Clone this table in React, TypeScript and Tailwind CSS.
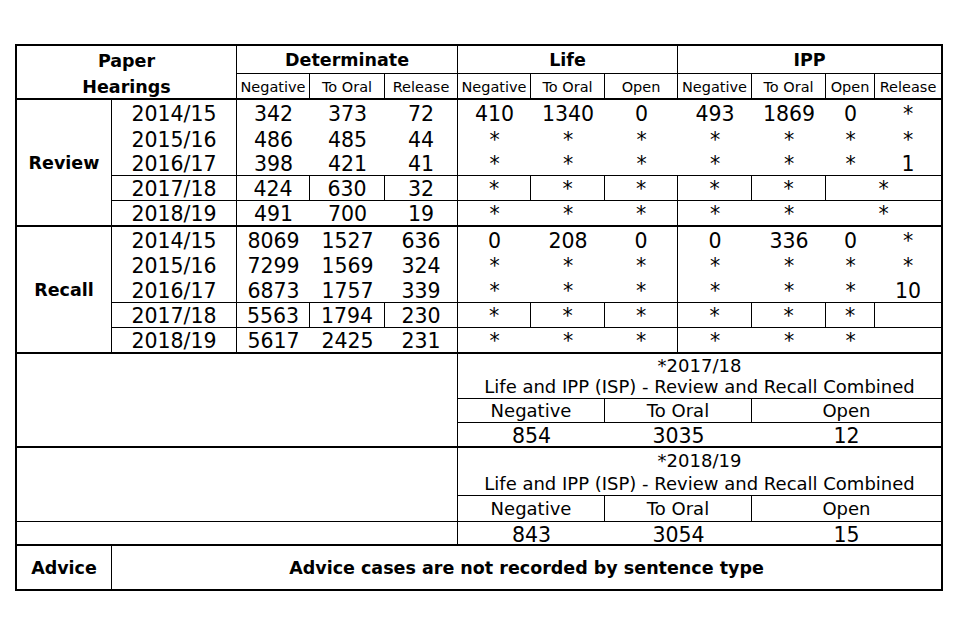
import React from "react";

type Row = {
  year: string;
  det: string[];
  life: string[];
  ipp: string[];
};

const S = "*";

const review: Row[] = [
  { year: "2014/15", det: ["342", "373", "72"], life: ["410", "1340", "0"], ipp: ["493", "1869", "0", S] },
  { year: "2015/16", det: ["486", "485", "44"], life: [S, S, S], ipp: [S, S, S, S] },
  { year: "2016/17", det: ["398", "421", "41"], life: [S, S, S], ipp: [S, S, S, "1"] },
  { year: "2017/18", det: ["424", "630", "32"], life: [S, S, S], ipp: [S, S, S] },
  { year: "2018/19", det: ["491", "700", "19"], life: [S, S, S], ipp: [S, S, S] },
];

const recall: Row[] = [
  { year: "2014/15", det: ["8069", "1527", "636"], life: ["0", "208", "0"], ipp: ["0", "336", "0", S] },
  { year: "2015/16", det: ["7299", "1569", "324"], life: [S, S, S], ipp: [S, S, S, S] },
  { year: "2016/17", det: ["6873", "1757", "339"], life: [S, S, S], ipp: [S, S, S, "10"] },
  { year: "2017/18", det: ["5563", "1794", "230"], life: [S, S, S], ipp: [S, S, S, ""] },
  { year: "2018/19", det: ["5617", "2425", "231"], life: [S, S, S], ipp: [S, S, S, ""] },
];

const base = "flex items-center justify-center leading-none whitespace-nowrap";
const num = "text-[20.5px] pt-[3px]";

function Cell({ c, children }: { c: string; children?: React.ReactNode }) {
  return <div className={`${base} ${c}`}>{children}</div>;
}

function Block({ label, rows, isRecall }: { label: string; rows: Row[]; isRecall: boolean }) {
  const out: React.ReactNode[] = [];
  rows.forEach((r, i) => {
    const bb = i < 2 ? "" : i === 4 ? "border-b-2" : "border-b";
    const split = i === 3;
    if (i === 0) {
      out.push(
        <Cell key="label" c="row-span-5 border-r border-b-2 font-bold text-[17.5px] pt-[2px]">
          {label}
        </Cell>
      );
    }
    out.push(
      <Cell key={`y${i}`} c={`${num} border-r ${bb}`}>
        {r.year}
      </Cell>
    );
    r.det.forEach((v, j) => {
      const br = split || j === 2 ? "border-r" : "";
      out.push(
        <Cell key={`d${i}${j}`} c={`${num} ${br} ${bb}`}>
          {v}
        </Cell>
      );
    });
    r.life.forEach((v, j) => {
      const br = split || (j === 2 && (isRecall || i >= 3)) ? "border-r" : "";
      out.push(
        <Cell key={`l${i}${j}`} c={`${num} ${br} ${bb}`}>
          {v}
        </Cell>
      );
    });
    if (r.ipp.length === 3) {
      out.push(
        <Cell key={`p${i}0`} c={`${num} ${split ? "border-r" : ""} ${bb}`}>
          {r.ipp[0]}
        </Cell>,
        <Cell key={`p${i}1`} c={`${num} ${split ? "border-r" : ""} ${bb}`}>
          {r.ipp[1]}
        </Cell>,
        <Cell key={`p${i}2`} c={`col-span-2 ${num} ${bb}`}>
          {r.ipp[2]}
        </Cell>
      );
    } else {
      r.ipp.forEach((v, j) => {
        const br = split && j < 3 ? "border-r" : "";
        out.push(
          <Cell key={`p${i}${j}`} c={`${num} ${br} ${bb}`}>
            {v}
          </Cell>
        );
      });
    }
  });
  return <>{out}</>;
}

function Combined({ year, values, first }: { year: string; values: string[]; first: boolean }) {
  const valPad = first ? "pt-[3px]" : "pt-[5px]";
  return (
    <>
      {first ? (
        <Cell c="col-span-5 row-span-4 border-r border-b-2" />
      ) : (
        <Cell c="col-span-5 row-span-3 border-r border-b" />
      )}
      <Cell c="col-span-7 text-[18px] pt-[1px]">{year}</Cell>
      <Cell c="col-span-7 text-[18px] border-b">
        Life and IPP (ISP) - Review and Recall Combined
      </Cell>
      <Cell c="col-span-2 text-[18px] border-r border-b">Negative</Cell>
      <Cell c="col-span-2 text-[18px] border-r border-b">To Oral</Cell>
      <Cell c="col-span-3 text-[18px] border-b">Open</Cell>
      {!first && <Cell c="col-span-5 border-r border-b-2" />}
      <Cell c={`col-span-2 text-[20.5px] border-b-2 ${valPad}`}>{values[0]}</Cell>
      <Cell c={`col-span-2 text-[20.5px] border-b-2 ${valPad}`}>{values[1]}</Cell>
      <Cell c={`col-span-3 text-[20.5px] border-b-2 ${valPad}`}>{values[2]}</Cell>
    </>
  );
}

export default function App() {
  const subs = ["Negative", "To Oral", "Release", "Negative", "To Oral", "Open", "Negative", "To Oral", "Open", "Release"];
  return (
    <div className="w-[960px] h-[640px] bg-white pt-[44px] pl-[15px] font-['DejaVu_Sans',sans-serif] text-black">
      <div className="grid w-[928px] border-2 border-black grid-cols-[95px_125px_73px_75px_73px_73px_74px_73px_74px_74px_49px_66px] grid-rows-[28px_26px_26px_25px_25px_25px_26px_25px_25px_26px_25px_26px_22px_23px_24px_25px_24px_24px_26px_24px_43px]">
        {/* Header */}
        <div className="col-span-2 row-span-2 border-r border-b-2 flex flex-col items-center pt-[2px] font-bold text-[17.5px] leading-[26px]">
          <span>Paper</span>
          <span>Hearings</span>
        </div>
        <Cell c="col-span-3 border-r border-b font-bold text-[17.5px] pt-[3px]">Determinate</Cell>
        <Cell c="col-span-3 border-r border-b font-bold text-[17.5px] pt-[3px]">Life</Cell>
        <Cell c="col-span-4 border-b font-bold text-[17.5px] pt-[3px]">IPP</Cell>
        {subs.map((s, i) => (
          <Cell key={i} c={`text-[14.5px] pt-[2px] border-b-2 ${i < subs.length - 1 ? "border-r" : ""}`}>
            {s}
          </Cell>
        ))}

        <Block label="Review" rows={review} isRecall={false} />
        <Block label="Recall" rows={recall} isRecall={true} />

        <Combined year="*2017/18" values={["854", "3035", "12"]} first={true} />
        <Combined year="*2018/19" values={["843", "3054", "15"]} first={false} />

        {/* Advice */}
        <Cell c="border-r font-bold text-[17.5px] pt-[3px]">Advice</Cell>
        <Cell c="col-span-11 font-bold text-[17.5px] pt-[3px]">
          Advice cases are not recorded by sentence type
        </Cell>
      </div>
    </div>
  );
}
